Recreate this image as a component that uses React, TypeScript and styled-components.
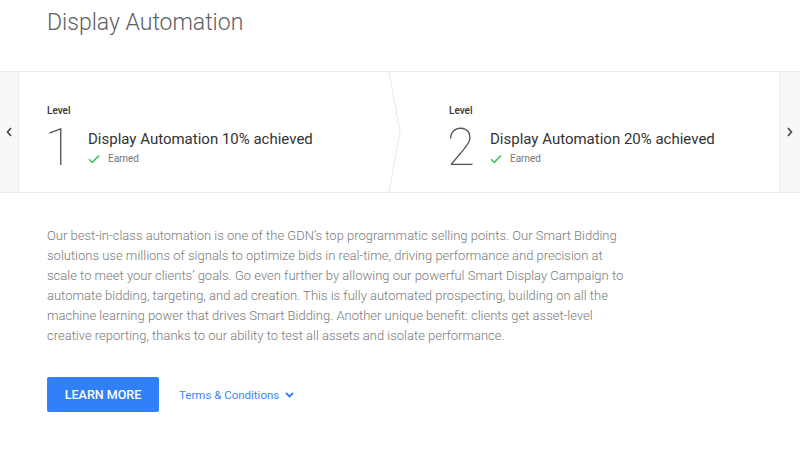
import React, { FC } from "react";
import styled, { createGlobalStyle } from "styled-components";

const GlobalStyle = createGlobalStyle`
  html, body {
    margin: 0;
    padding: 0;
    background: #ffffff;
    font-family: Roboto, "Liberation Sans", Arial, sans-serif;
  }
`;

const levels = [
  { num: "1", title: "Display Automation 10% achieved" },
  { num: "2", title: "Display Automation 20% achieved" },
];

const CheckIcon: FC = () => (
  <svg width="12" height="10" viewBox="0 0 12 10" fill="none">
    <path d="M1 5.2 L4.3 8.4 L11 1.6" stroke="#3cc36a" strokeWidth="1.5" />
  </svg>
);

const Chevron: FC<{ dir: "left" | "right" }> = ({ dir }) => (
  <svg width="6" height="10" viewBox="0 0 6 10" fill="none">
    <path
      d={dir === "left" ? "M5 1 L1.5 5 L5 9" : "M1 1 L4.5 5 L1 9"}
      stroke="#444"
      strokeWidth="1.6"
    />
  </svg>
);

const App: FC = () => {
  return (
    <Page>
      <GlobalStyle />
      <Title>Display Automation</Title>
      <LevelBand>
        <Gutter>
          <Chevron dir="left" />
        </Gutter>
        <Cards>
          {levels.map((lvl, i) => (
            <Card key={lvl.num} $first={i === 0}>
              <LevelLabel>Level</LevelLabel>
              <LevelRow>
                <LevelNumber>{lvl.num}</LevelNumber>
                <LevelInfo>
                  <LevelTitle>{lvl.title}</LevelTitle>
                  <Earned>
                    <CheckIcon />
                    <span>Earned</span>
                  </Earned>
                </LevelInfo>
              </LevelRow>
              {i === 0 && (
                <Divider viewBox="0 0 14 122" preserveAspectRatio="none">
                  <path d="M1 0 L12 60 L1 122" stroke="#ececec" strokeWidth="1.2" fill="none" />
                </Divider>
              )}
            </Card>
          ))}
        </Cards>
        <Gutter $right>
          <Chevron dir="right" />
        </Gutter>
      </LevelBand>
      <Body>
        Our best-in-class automation is one of the GDN’s top programmatic selling points. Our Smart
        Bidding solutions use millions of signals to optimize bids in real-time, driving performance
        and precision at scale to meet your clients’ goals. Go even further by allowing our powerful
        Smart Display Campaign to automate bidding, targeting, and ad creation. This is fully
        automated prospecting, building on all the machine learning power that drives Smart Bidding.
        Another unique benefit: clients get asset-level creative reporting, thanks to our ability to
        test all assets and isolate performance.
      </Body>
      <Actions>
        <PrimaryButton>LEARN MORE</PrimaryButton>
        <TermsLink>
          Terms &amp; Conditions
          <svg width="9" height="6" viewBox="0 0 9 6" fill="none">
            <path d="M1 1 L4.5 4.5 L8 1" stroke="#2f7df6" strokeWidth="1.8" />
          </svg>
        </TermsLink>
      </Actions>
    </Page>
  );
};

export default App;

const Page = styled.div`
  width: 800px;
  height: 450px;
  overflow: hidden;
  background: #fff;
`;

const Title = styled.h1`
  margin: 0;
  padding: 6px 0 0 47px;
  height: 65px;
  font-size: 23px;
  font-weight: 300;
  color: #616161;
  line-height: 34px;
`;

const LevelBand = styled.section`
  display: flex;
  height: 120px;
  border-top: 1px solid #ebebeb;
  border-bottom: 1px solid #ebebeb;
`;

const Gutter = styled.div<{ $right?: boolean }>`
  width: ${(p) => (p.$right ? "20px" : "18px")};
  flex-shrink: 0;
  background: #f8f8f8;
  display: flex;
  align-items: center;
  justify-content: center;
  ${(p) => (p.$right ? "border-left: 1px solid #ececec;" : "border-right: 1px solid #ececec;")}
`;

const Cards = styled.div`
  flex: 1;
  display: grid;
  grid-template-columns: 380px 1fr;
`;

const Card = styled.div<{ $first: boolean }>`
  position: relative;
  padding: 32px 0 0 ${(p) => (p.$first ? "28px" : "50px")};
`;

const Divider = styled.svg`
  position: absolute;
  top: 0;
  right: -3px;
  width: 14px;
  height: 120px;
`;

const LevelLabel = styled.div`
  font-size: 10px;
  font-weight: 500;
  color: #333;
  height: 14px;
  line-height: 14px;
`;

const LevelRow = styled.div`
  display: flex;
  align-items: flex-start;
`;

const LevelNumber = styled.div`
  width: 43px;
  font-size: 51px;
  font-weight: 100;
  color: #555;
  line-height: 60px;
  margin-left: -2px;
`;

const LevelInfo = styled.div`
  display: flex;
  flex-direction: column;
  padding-top: 12px;
`;

const LevelTitle = styled.div`
  font-size: 15px;
  font-weight: 400;
  color: #333;
  line-height: 19px;
`;

const Earned = styled.div`
  display: flex;
  align-items: center;
  gap: 8px;
  margin-top: 3px;
  font-size: 10px;
  color: #777;
  line-height: 14px;
`;

const Body = styled.p`
  margin: 33px 0 0 47px;
  width: 580px;
  font-size: 13px;
  font-weight: 300;
  line-height: 20px;
  color: #7a7a7a;
`;

const Actions = styled.div`
  display: flex;
  align-items: center;
  gap: 20px;
  margin: 31px 0 0 47px;
`;

const PrimaryButton = styled.button`
  width: 112px;
  height: 35px;
  border: none;
  border-radius: 2px;
  background: #3080f8;
  color: #fff;
  font-family: Roboto, "Liberation Sans", Arial, sans-serif;
  font-size: 12.5px;
  font-weight: 500;
  cursor: pointer;
`;

const TermsLink = styled.a`
  display: flex;
  align-items: center;
  gap: 6px;
  font-size: 11.5px;
  color: #3a86f5;
  cursor: pointer;
`;
